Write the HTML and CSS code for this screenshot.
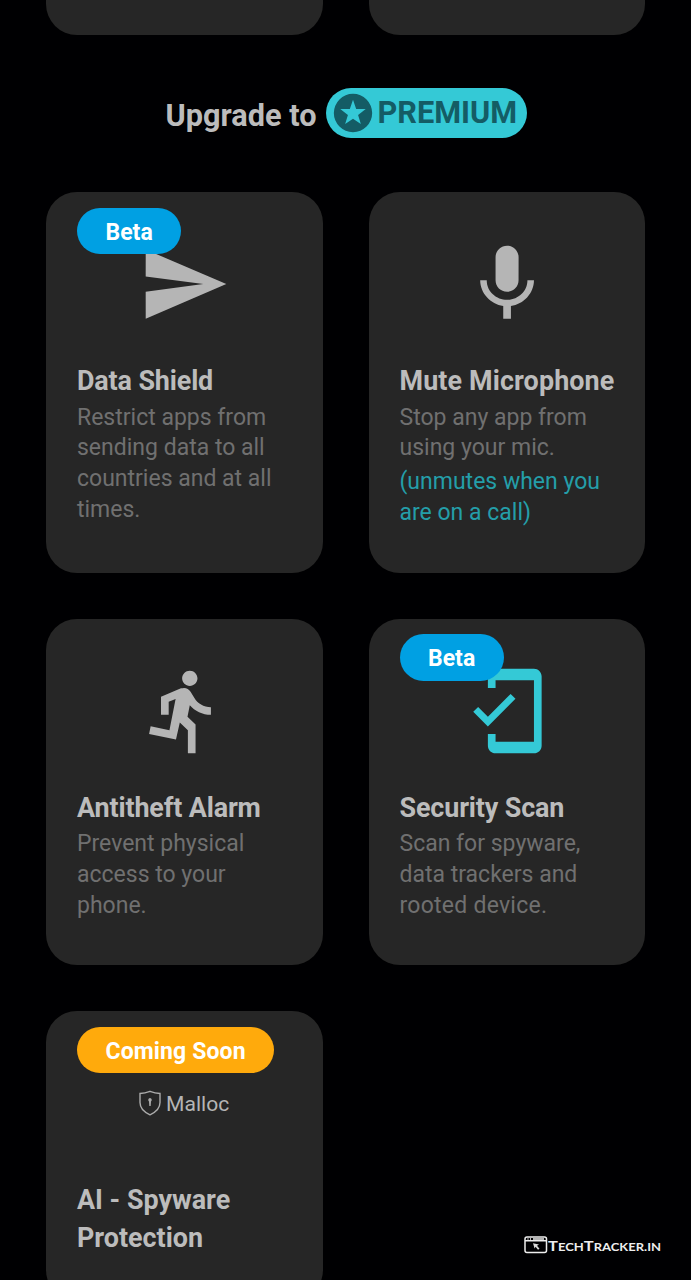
FILE: index.html
```
<!DOCTYPE html>
<html lang="en">
<head>
<meta charset="utf-8">
<title>Upgrade to Premium</title>
<link rel="stylesheet" href="styles.css">
</head>
<body>
<main class="screen">
  <div class="grid grid-top">
    <div class="card card-tail"></div>
    <div class="card card-tail"></div>
  </div>
  <h1 class="upgrade">
    <span class="upgrade-label">Upgrade to</span>
    <span class="premium">
      <svg class="star" viewBox="0 0 24 24"><path fill-rule="evenodd" d="M12 2a10 10 0 1 0 0 20 10 10 0 0 0 0-20zM12 5.100l1.650 4.750 5 .1-4 3.050 1.450 4.800L12 14.950 7.900 17.800l1.450-4.800-4-3.050 5-.1z"/></svg>
      <span class="premium-label">PREMIUM</span>
    </span>
  </h1>
  <div class="grid">
    <section class="card">
      <span class="badge">Beta</span>
      <svg class="icon" viewBox="0 0 24 24"><path d="M2.01 21L23 12 2.01 3 2 10l15 2-15 2z"/></svg>
      <h2 class="title">Data Shield</h2>
      <p class="text">Restrict apps from<br>sending data to all<br>countries and at all<br>times.</p>
    </section>
    <section class="card">
      <svg class="icon" viewBox="0 0 24 24"><path d="M12 14c1.66 0 2.99-1.34 2.99-3L15 5c0-1.66-1.34-3-3-3S9 3.34 9 5v6c0 1.66 1.34 3 3 3zm5.3-3c0 3-2.54 5.1-5.3 5.1S6.7 14 6.7 11H5c0 3.41 2.72 6.23 6 6.72V21h2v-3.28c3.28-.48 6-3.3 6-6.72h-1.7z"/></svg>
      <h2 class="title title-mute">Mute Microphone</h2>
      <p class="text">Stop any app from<br>using your mic.</p>
      <p class="text note">(unmutes when you<br>are on a call)</p>
    </section>
    <section class="card">
      <svg class="icon" viewBox="0 0 24 24"><path d="M13.49 5.48c1.1 0 2-.9 2-2s-.9-2-2-2-2 .9-2 2 .9 2 2 2zm-3.6 13.9l1-4.4 2.1 2v6h2v-7.5l-2.1-2 .6-3c1.3 1.5 3.3 2.5 5.5 2.5v-2c-1.9 0-3.5-1-4.3-2.4l-1-1.6c-.4-.6-1-1-1.7-1-.3 0-.5.1-.8.1l-5.2 2.2v4.7h2v-3.4l1.8-.7-1.6 8.1-4.9-1-.4 2 7 1.4z"/></svg>
      <h2 class="title">Antitheft Alarm</h2>
      <p class="text">Prevent physical<br>access to your<br>phone.</p>
    </section>
    <section class="card">
      <span class="badge">Beta</span>
      <svg class="icon icon-scan" viewBox="0 0 24 24"><path d="M19 1H9c-1.1 0-2 .9-2 2v3h2V4h10v16H9v-2H7v3c0 1.1.9 2 2 2h10c1.1 0 2-.9 2-2V3c0-1.1-.9-2-2-2zM7.01 13.47l-2.55-2.55-1.27 1.27L7 16l7.19-7.19-1.27-1.27z"/></svg>
      <h2 class="title">Security Scan</h2>
      <p class="text">Scan for spyware,<br>data trackers and<br><span class="loose">rooted device.</span></p>
    </section>
    <section class="card">
      <span class="badge badge-soon">Coming Soon</span>
      <div class="brand">
        <svg class="shield" viewBox="0 0 22 26"><path class="line" d="M1 3.500Q6 3 11 1.300q5 1.700 10 2.200v9c0 6-4.500 9.800-10 12.300C5.500 22.300 1 18.500 1 12.500z"/><path class="key" d="M11 8a1.9 1.9 0 0 1 1 3.400l-.3 4.600h-1.400l-.3-4.600A1.900 1.900 0 0 1 11 8z"/></svg>
        <span class="brand-label">Malloc</span>
      </div>
      <h2 class="title title-soon">AI - Spyware<br>Protection</h2>
    </section>
  </div>
  <div class="watermark">
    <svg class="window" viewBox="0 0 24 18"><path class="frame" d="M3 1h17.500a2 2 0 0 1 2 2v11.500a2 2 0 0 1-2 2H3a2 2 0 0 1-2-2V3a2 2 0 0 1 2-2zM1 4.800h21.500"/><path class="dots" d="M3.500 2.900h1M6 2.900h1M9 2.900h11"/><path class="pointer" d="M9 7.300l6 1.200-2 1.200 2.500 3-1.500 1-2.400-3-1 1.800z"/></svg>
    <span class="mark">T<small>ECH</small>T<small>RACKER.IN</small></span>
  </div>
</main>
</body>
</html>
```
FILE: styles.css
```
* { box-sizing: border-box; }
body { margin: 0; background: #000002; font-family: Roboto, "Liberation Sans", sans-serif; }
h1, h2, p { margin: 0; }
.screen { position: relative; height: 1280px; overflow: hidden; }
.grid { display: grid; grid-template-columns: 276.500px 276.500px; gap: 46px; padding: 0 46px; align-items: stretch; }
.card { position: relative; display: flex; flex-direction: column; background: #262626; border-radius: 31px; padding: 46px 0 44.200px 31px; }
.card-tail { height: 34.500px; padding: 0; border-radius: 0 0 31px 31px; }
.upgrade { display: flex; justify-content: center; align-items: center; gap: 10px; height: 50px; margin: 53.500px 0 54px; padding-left: 2px; font-weight: 700; font-size: 30.700px; color: #bcbcbc; }
.upgrade-label { padding-top: 4px; letter-spacing: 0; }
.premium { display: flex; align-items: center; height: 50px; width: 201px; padding-left: 4px; border-radius: 25px; background: #34c9d6; }
.star { width: 46px; height: 46px; fill: #145c65; }
.premium-label { color: #145c65; padding-bottom: 2px; margin-left: 1px; }
.icon { width: 92.160px; height: 92.160px; margin-left: 61.400px; fill: #b5b5b5; flex: none; }
.icon-scan { fill: #34c9d6; }
.badge { position: absolute; left: 31px; top: 15.500px; height: 46.500px; padding: 2px 28.500px 0; border-radius: 24px; background: #00a0e3; color: #fff; font-size: 23px; font-weight: 700; line-height: 46px; white-space: nowrap; }
.badge-soon { background: #ffaa0c; letter-spacing: .13px; }
.title { margin-top: 32px; font-size: 26.900px; line-height: 38px; font-weight: 700; letter-spacing: -.13px; color: #bcbcbc; white-space: nowrap; }
.title-mute { letter-spacing: .12px; }
.text { margin-top: 2.400px; font-size: 23px; line-height: 30.700px; color: #707070; white-space: nowrap; }
.loose { letter-spacing: .25px; }
.note { margin-top: 3px; color: #249ea9; }
.brand { display: flex; align-items: center; gap: 5px; height: 92px; margin-left: 62px; }
.shield { width: 22px; height: 26px; fill: none; }
.line { stroke: #ababab; stroke-width: 1.400; }
.key { fill: #ababab; }
.brand-label { font-size: 21.100px; color: #b5b5b5; }
.title-soon { margin-top: 31.700px; letter-spacing: 0; }
.watermark { position: absolute; left: 524px; top: 1235px; display: flex; align-items: center; height: 20px; }
.window { width: 24px; height: 18px; fill: none; stroke: #eee; stroke-width: 1.500; }
.pointer { fill: #ddd; stroke: none; }
.mark { display: block; transform: scaleX(1.180); transform-origin: left; font-family: Lato, sans-serif; font-size: 14px; font-weight: 700; color: #eee; white-space: nowrap; }
.mark small { font-size: 11px; }
```
